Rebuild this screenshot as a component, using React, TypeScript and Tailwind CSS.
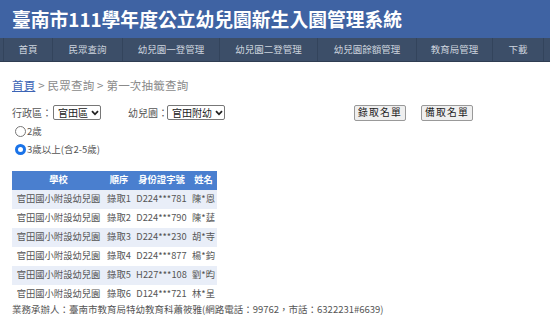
import React from "react";

const rows = [
  ["官田國小附設幼兒園", "錄取1", "D224***781", "陳*恩"],
  ["官田國小附設幼兒園", "錄取2", "D224***790", "陳*莛"],
  ["官田國小附設幼兒園", "錄取3", "D224***230", "胡*寺"],
  ["官田國小附設幼兒園", "錄取4", "D224***877", "楊*鈞"],
  ["官田國小附設幼兒園", "錄取5", "H227***108", "劉*昀"],
  ["官田國小附設幼兒園", "錄取6", "D124***721", "林*呈"],
];

const nav = ["首頁", "民眾查詢", "幼兒園一登管理", "幼兒園二登管理", "幼兒園餘額管理", "教育局管理", "下載"];
const navW = ["w-[50px]", "w-[70px]", "w-[97px]", "w-[98px]", "w-[99px]", "w-[76px]", "w-[51px]"];

function Chevron() {
  return (
    <svg width="8" height="6" viewBox="0 0 8 6" className="ml-[3px] shrink-0">
      <path d="M1 1.2 L4 4.3 L7 1.2" stroke="#222" strokeWidth="1.8" fill="none" />
    </svg>
  );
}

export default function App() {
  return (
    <div
      className="w-[550px] h-[336px] bg-white overflow-hidden"
      style={{ fontFamily: '"Noto Sans CJK TC", "Noto Sans", sans-serif' }}
    >
      <div className="h-[38px] bg-[#3f63a3] flex items-center pl-[12px]">
        <span className="text-white font-bold text-[18.8px] leading-none whitespace-nowrap">
          臺南市111學年度公立幼兒園新生入園管理系統
        </span>
      </div>
      <div className="h-[24px] bg-[#3c4e68] border-b border-[#2f3d52] flex pl-[3px]">
        {nav.map((n, i) => (
          <div
            key={n}
            className={`${navW[i]} shrink-0 flex items-center justify-center whitespace-nowrap text-[9.5px] text-[#cdd4de] border-r border-[#33445c] ${i === 0 ? "border-l" : ""}`}
          >
            {n}
          </div>
        ))}
      </div>
      <div className="px-[12px]">
        <div className="pt-[18px] text-[11.5px] text-[#8a8a8a] leading-none tracking-[0.2px]">
          <span className="text-[#3b63b5] underline">首頁</span>
          <span> &gt; 民眾查詢 &gt; 第一次抽籤查詢</span>
        </div>
        <div className="mt-[13px] flex items-center text-[10px] text-[#555] h-[16px] whitespace-nowrap">
          <span className="w-[41px] shrink-0">行政區：</span>
          <div className="w-[48px] shrink-0 h-[15px] border border-[#777] rounded-[2px] flex items-center justify-between px-[4px] text-[#222]">
            官田區<Chevron />
          </div>
          <span className="ml-[27px] w-[39px] shrink-0">幼兒園：</span>
          <div className="w-[58px] shrink-0 h-[15px] border border-[#777] rounded-[2px] flex items-center justify-between px-[4px] text-[#222]">
            官田附幼<Chevron />
          </div>
          <div className="ml-[129px] shrink-0 h-[16px] w-[52px] border border-[#999] rounded-[2px] bg-[#efefef] flex items-center justify-center text-[#222] text-[9.8px] tracking-[1.2px]">
            錄取名單
          </div>
          <div className="ml-[15px] shrink-0 h-[16px] w-[52px] border border-[#999] rounded-[2px] bg-[#efefef] flex items-center justify-center text-[#222] text-[9.8px] tracking-[1.2px]">
            備取名單
          </div>
        </div>
        <div className="mt-[3px] flex items-center text-[9.5px] text-[#555] h-[16px] pl-[3px]">
          <span className="w-[11px] h-[11px] rounded-full border border-[#777] bg-white mr-[1px]" />
          <span>2歲</span>
        </div>
        <div className="mt-[2px] flex items-center text-[9.5px] text-[#555] h-[16px] pl-[3px]">
          <span className="w-[11px] h-[11px] rounded-full border-[3px] border-[#1a73e8] bg-white mr-[1px]" />
          <span>3歲以上(含2-5歲)</span>
        </div>
        <table className="mt-[13px] w-[205px] border-collapse table-fixed text-[9.3px] text-[#555]">
          <colgroup>
            <col className="w-[93px]" />
            <col className="w-[28px]" />
            <col className="w-[57px]" />
            <col className="w-[27px]" />
          </colgroup>
          <thead>
            <tr className="bg-[#4a7fcf] text-white h-[19px]">
              <th className="text-center font-bold">學校</th>
              <th className="text-center font-bold">順序</th>
              <th className="text-center font-bold">身份證字號</th>
              <th className="text-center font-bold">姓名</th>
            </tr>
          </thead>
          <tbody>
            {rows.map((r, i) => (
              <tr key={i} className={`h-[19px] ${i % 2 === 0 ? "bg-[#e9eef8]" : "bg-white"}`}>
                <td className="text-center whitespace-nowrap">{r[0]}</td>
                <td className="text-center whitespace-nowrap">{r[1]}</td>
                <td className="text-center whitespace-nowrap">{r[2]}</td>
                <td className="text-center whitespace-nowrap">{r[3]}</td>
              </tr>
            ))}
          </tbody>
        </table>
        <div className="mt-[1px] text-[9.5px] text-[#555] leading-none whitespace-nowrap">
          業務承辦人：臺南市教育局特幼教育科蕭筱雅(網路電話：99762，市話：6322231#6639)
        </div>
      </div>
    </div>
  );
}
